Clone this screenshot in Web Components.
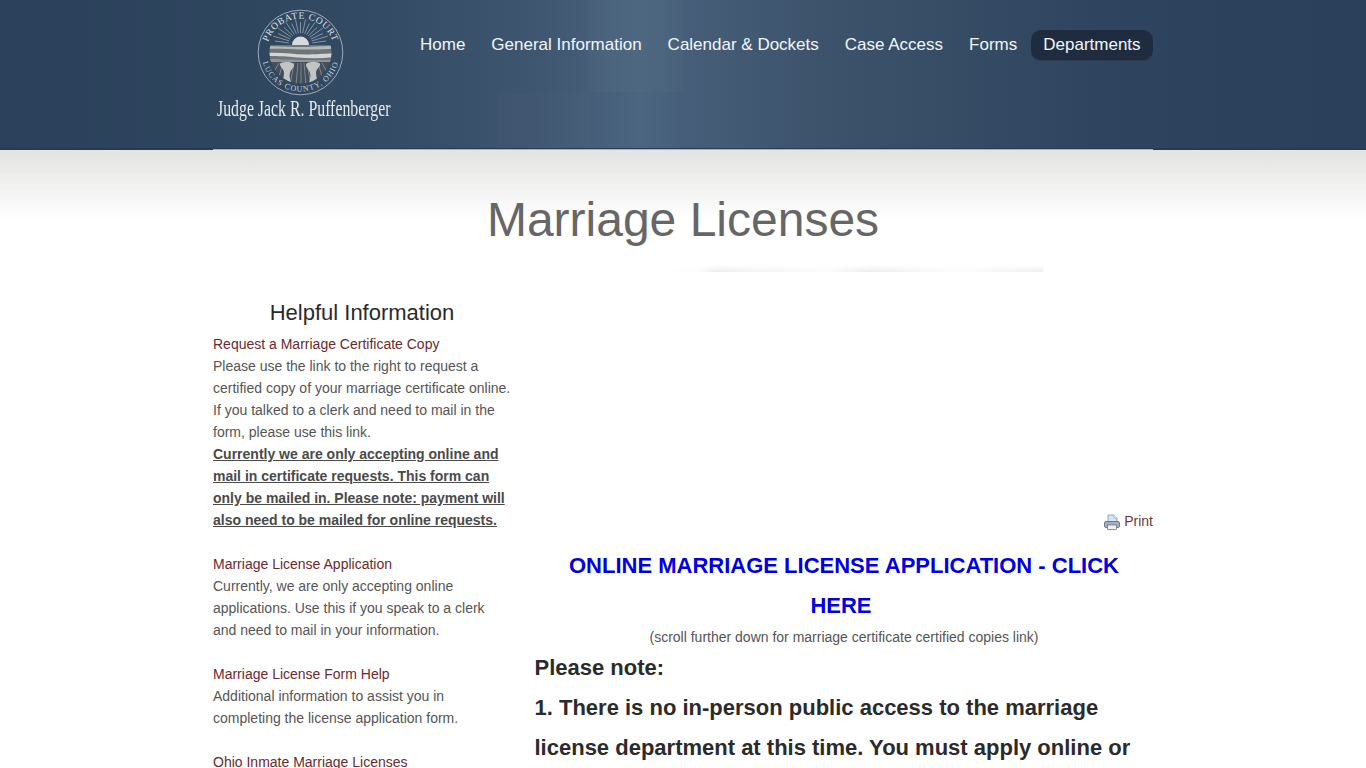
<!DOCTYPE html>
<html lang="en"><head><meta charset="utf-8"><title>Marriage Licenses</title>
<style>
html,body{margin:0;padding:0;background:#fff;height:768px;overflow:hidden}
body{font-family:"Liberation Sans",Arial,sans-serif;font-size:14px;line-height:22px;color:#555}
</style></head><body>
<site-header></site-header>
<page-title>Marriage Licenses</page-title>
<page-body>
  <side-info slot="side"></side-info>
  <main-content slot="main"></main-content>
</page-body>
<script>
function def(name,html){customElements.define(name,class extends HTMLElement{constructor(){super();this.attachShadow({mode:'open'}).innerHTML=html}})}
const rays=Array.from({length:17},(_,i)=>{const a=(-170+i*10)*Math.PI/180;const c=Math.cos(a),s=Math.sin(a);return `<line x1="${(43.5+12*c).toFixed(1)}" y1="${(36+12*s).toFixed(1)}" x2="${(43.5+(i%2?29:26)*c).toFixed(1)}" y2="${(36+(i%2?26:23)*s).toFixed(1)}"/>`}).join('');
def('court-seal',`<style>:host{display:block;width:87px;height:87px}svg{display:block}</style>
<svg width="87" height="87" viewBox="0 0 87 87">
<circle cx="43.5" cy="43.5" r="42.300" fill="none" stroke="#b9c4d0" stroke-width=".8"/>
<defs><path id="t" d="M9.500 43.500a34 34 0 0 1 68 0"/><path id="b" d="M4.500 43.500a39 39 0 0 0 78 0"/><clipPath id="cp"><circle cx="43.500" cy="43.500" r="31"/></clipPath></defs>
<text font-family="Liberation Serif,serif" font-size="9.500" fill="#dce1e6" letter-spacing=".7"><textPath href="#t" startOffset="50%" text-anchor="middle">PROBATE COURT</textPath></text>
<text font-family="Liberation Serif,serif" font-size="8" fill="#c6ced6" letter-spacing="1"><textPath href="#b" startOffset="50%" text-anchor="middle">LUCAS COUNTY, OHIO</textPath></text>
<g stroke="#a9b3bd" stroke-width=".7">${rays}</g>
<path d="M35 36a8.500 8.500 0 0 1 17 0z" fill="#d8dad9"/>
<g clip-path="url(#cp)">
<rect x="10" y="36" width="67" height="17" fill="#6d757b"/>
<path d="M10 37.500c12-1 22 .5 34 .5s22-1.500 33-1v2.500c-11 1-22 1-33 1s-22-1-34-.5z" fill="#b4b8ba"/>
<path d="M10 44c14-1 26 1.500 38 1.500s20-1 29-1v3.500c-12 1.500-24 1.500-36 .5s-20-1.500-31-1.500z" fill="#d4d6d5"/>
<path d="M10 50c14 0 30 1.500 67 1v2H10z" fill="#8f9599"/>
<rect x="10" y="53" width="67" height="24" fill="#434f5b"/>
<path d="M37 54l-4 22M41 54l-2 22M44 54v22M47 54l2 22M50 54l4 22M26 54l-6 20M22 54l-8 14M61 54l6 20M65 54l8 14" stroke="#8e969d" stroke-width=".8" fill="none"/>
<path d="M30 53c-5 0-8 1-7 3 1 3 4 4 4 8 0 3-1 6-2 10h9c-1-4-2-7-1-10 1-4 4-5 4-8 0-2-3-3-7-3zM56 53c5 0 8 1 7 3-1 3-4 4-4 8 0 3 1 6 2 10h-9c1-4 2-7 1-10-1-4-4-5-4-8 0-2 3-3 7-3z" fill="#c3c5c4"/>
</g></svg>`);
def('court-logo',`<style>:host{display:flex;flex-direction:column;align-items:flex-start;width:180px;flex:none;padding-top:9px}
court-seal{margin-left:44px}
.n{font:23px/1 "Liberation Serif",serif;color:#e6eaee;white-space:nowrap;transform:scaleX(.688);transform-origin:0 50%;margin:1px 0 0 4px}</style>
<court-seal></court-seal><div class="n">Judge Jack R. Puffenberger</div>`);
def('nav-item',`<style>:host{display:block;padding:0 12px 2px;border-radius:10px;font-size:17px;line-height:29px;color:#f2f6f8;white-space:nowrap;margin:0 1px}
:host([active]){background:#1f2c40;box-shadow:inset 0 -1px 0 #2c3b50}</style><slot></slot>`);
def('site-nav',`<style>:host{display:flex;margin-left:14px;padding-top:30px;align-items:flex-start}</style><slot></slot>`);
def('site-header',`<style>
:host{display:block;height:150px;box-sizing:border-box;position:relative;background:
linear-gradient(90deg,#2b415b 0,#2f465f 250px,#354c66 400px,#3f5670 540px,#4c6580 640px,#465e79 683px,#3d536c 820px,#2f445e 1100px,#2a3f59 1366px);}
.sh{position:absolute;left:588px;top:0;width:95px;height:92px;background:rgba(255,255,255,.018)}
.sh2{position:absolute;left:497px;top:92px;width:93px;height:56px;background:rgba(255,255,255,.015)}
.line{position:absolute;left:0;right:0;bottom:0;height:2px;background:#263a50}
.line2{position:absolute;left:213px;width:940px;bottom:0;height:1px;background:#aab4bf}
.wrap{position:relative;width:940px;margin:0 auto;display:flex;height:148px}
</style>
<div class="sh"></div><div class="sh2"></div><div class="line"></div><div class="line2"></div>
<div class="wrap"><court-logo></court-logo>
<site-nav><nav-item>Home</nav-item><nav-item>General Information</nav-item><nav-item>Calendar &amp; Dockets</nav-item><nav-item>Case Access</nav-item><nav-item>Forms</nav-item><nav-item active>Departments</nav-item></site-nav></div>`);
def('page-title',`<style>:host{display:flex;flex-direction:column;height:122px;box-sizing:border-box;text-align:center;background:linear-gradient(#e3e3e2,#fff 70px);padding-top:44px;font-size:48px;line-height:52px;color:#666}
.t{flex:1}
.sm{height:7px;width:385px;margin-left:660px;background:linear-gradient(90deg,transparent 0,#fcfcfc 40px,#ececec 56px,#f2f2f2 90px,#fbfbfb 170px,#ebebeb 212px,#f4f4f4 250px,#fcfcfc 300px,#f0f0f0 368px,#efefef 382px,transparent 385px);-webkit-mask-image:linear-gradient(transparent,#000);mask-image:linear-gradient(transparent,#000)}</style>
<div class="t"><slot></slot></div><div class="sm"></div>`);
def('page-body',`<style>:host{display:flex;width:940px;margin:0 auto;gap:20px}
::slotted([slot=side]){width:300px;flex:none}::slotted([slot=main]){width:620px;flex:none}</style>
<slot name="side"></slot><slot name="main"></slot>`);
def('side-info',`<style>:host{display:block;padding-top:29px}
h3{margin:0 0 8px;padding-right:2px;font:400 22px/24px "Liberation Sans",sans-serif;color:#2a2a2a;text-align:center}
a{color:#6b2a2e;text-decoration:none;display:block}p{margin:0 0 22px}
strong{text-decoration:underline;color:#4a4a4a}</style>
<h3>Helpful Information</h3>
<p><a>Request a Marriage Certificate Copy</a>Please use the link to the right to request a<br>certified copy of your marriage certificate online.<br>If you talked to a clerk and need to mail in the<br>form, please use this link.<br><strong>Currently we are only accepting online and<br>mail in certificate requests. This form can<br>only be mailed in. Please note: payment will<br>also need to be mailed for online requests.</strong></p>
<p><a>Marriage License Application</a>Currently, we are only accepting online<br>applications. Use this if you speak to a clerk<br>and need to mail in your information.</p>
<p><a>Marriage License Form Help</a>Additional information to assist you in<br>completing the license application form.</p>
<p><a>Ohio Inmate Marriage Licenses</a></p>`);
def('print-link',`<style>:host{display:flex;justify-content:flex-end;align-items:center;gap:4px;color:#6b3a3e;height:22px}svg{display:block;margin-top:1px}</style>
<svg width="16" height="16" viewBox="0 0 16 16"><path d="M4 1h6l3 3v5H4z" fill="#d3e5f6" stroke="#7c9ab8" stroke-width=".8"/><path d="M10 1v3h3" fill="#fff" stroke="#7c9ab8" stroke-width=".6"/><rect x=".5" y="7.500" width="15" height="6" rx="1.500" fill="#a4afba" stroke="#5a6774" stroke-width=".8"/><rect x="3.500" y="11" width="9" height="4.500" fill="#eef1f4" stroke="#66737f" stroke-width=".7"/></svg><span>Print</span>`);
def('main-content',`<style>:host{display:block;padding-top:238px}
.c{text-align:center;margin-left:2px}
a{display:block;margin-top:14px;font:700 22px/40px "Liberation Sans",sans-serif;color:#0000e0;padding:0 10px}
.s{line-height:22px;color:#555}
.b{font:700 22px/40px "Liberation Sans",sans-serif;color:#2b2b2b;padding-left:1.500px;margin:0}</style>
<print-link></print-link>
<div class="c"><a>ONLINE MARRIAGE LICENSE APPLICATION - CLICK<br>HERE&nbsp;</a><div class="s">(scroll further down for marriage certificate certified copies link)</div></div>
<p class="b">Please note:<br>1. There is no in-person public access to the marriage<br>license department at this time. You must apply online or</p>`);
</script></body></html>
